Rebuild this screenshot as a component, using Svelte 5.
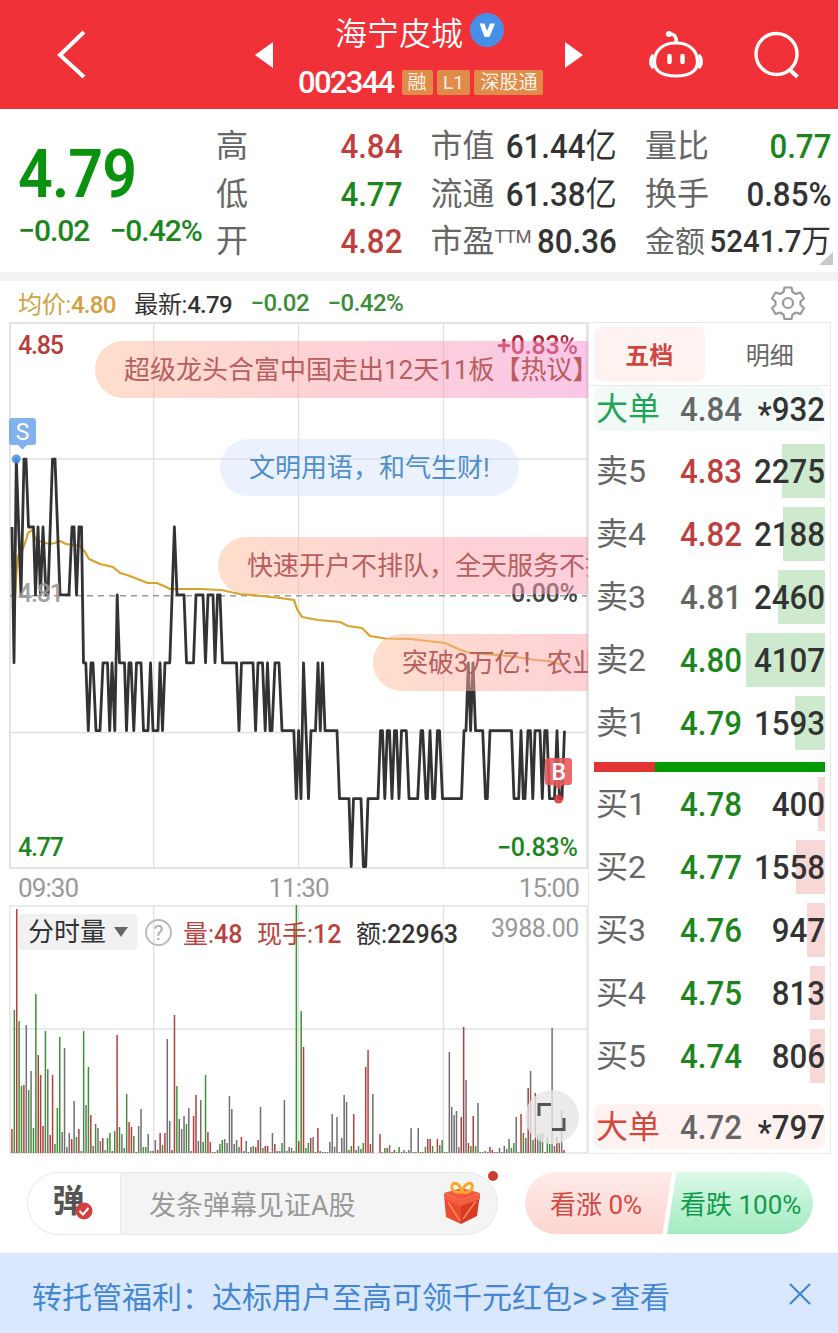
<script lang="ts">
	type Row = { name: string; price: string; vol: string; tone: string; bar: number };

	// label, figure, unit, tone
	const stats = [
		[['高', '4.84', '', 'red'], ['低', '4.77', '', 'green'], ['开', '4.82', '', 'red']],
		[['市值', '61.44', '亿', 'ink'], ['流通', '61.38', '亿', 'ink'], ['市盈', '80.36', '', 'ink']],
		[['量比', '0.77', '', 'green'], ['换手', '0.85%', '', 'ink'], ['金额', '5241.7', '万', 'ink']]
	];

	const asks: Row[] = [
		{ name: '卖5', price: '4.83', vol: '2275', tone: 'red', bar: 43 },
		{ name: '卖4', price: '4.82', vol: '2188', tone: 'red', bar: 42 },
		{ name: '卖3', price: '4.81', vol: '2460', tone: 'flat', bar: 47 },
		{ name: '卖2', price: '4.80', vol: '4107', tone: 'green', bar: 79 },
		{ name: '卖1', price: '4.79', vol: '1593', tone: 'green', bar: 30 }
	];
	const bids: Row[] = [
		{ name: '买1', price: '4.78', vol: '400', tone: 'green', bar: 7 },
		{ name: '买2', price: '4.77', vol: '1558', tone: 'green', bar: 29 },
		{ name: '买3', price: '4.76', vol: '947', tone: 'green', bar: 18 },
		{ name: '买4', price: '4.75', vol: '813', tone: 'green', bar: 15 },
		{ name: '买5', price: '4.74', vol: '806', tone: 'green', bar: 15 }
	];

	const danmaku = [
		{ text: '超级龙头合富中国走出12天11板【热议】', x: 95, y: 19, w: 520, kind: 'hot' },
		{ text: '文明用语，和气生财!', x: 220, y: 117, w: 299, kind: 'calm' },
		{ text: '快速开户不排队，全天服务不打烊', x: 218, y: 215, w: 450, kind: 'warm' },
		{ text: '突破3万亿！农业', x: 373, y: 312, w: 400, kind: 'warm' }
	];

	// [x, price in cents over 4.70]
	const ticks: [number, number][] = [
		[12, 12], [14, 10], [16.3, 13], [21, 11], [24, 13], [26, 13], [28.5, 12], [33.5, 12], [35.5, 11], [38, 12], [40.5, 11], [43, 12], [46, 11], [48, 11],
		[52.5, 13], [55, 13], [60, 11], [69, 11], [72, 12], [74, 12], [76.5, 11], [79, 12], [81.5, 12], [83.5, 10], [85.8, 10], [88.3, 9], [91, 10], [93, 10],
		[96, 9], [100, 9], [103, 10], [107.5, 10], [109.7, 9], [112, 10], [114.8, 9], [117.2, 11], [119.5, 10], [124.5, 10], [126.5, 9], [129, 10], [131, 10],
		[133.8, 9], [136.5, 10], [141, 10], [143.5, 9], [148, 9], [150.5, 10], [153, 9], [158, 9], [160, 10], [162.5, 9], [165, 10], [169.8, 10], [174.4, 12],
		[177, 11], [184, 11], [186.5, 10], [193.5, 10], [196, 11], [203, 11], [205.5, 10], [208, 11], [213, 11], [215, 10], [217.5, 11], [220, 11], [222.5, 10],
		[236.5, 10], [239, 9], [241.5, 10], [253, 10], [255.6, 9], [258, 10], [262.5, 10], [265.2, 9], [267.5, 10], [270, 9], [272, 9], [275, 10], [279, 10],
		[282, 9], [293.8, 9], [296.3, 8], [298.6, 9], [301, 8], [303.5, 10], [308.5, 8], [311, 9], [315.5, 9], [318, 10], [320.3, 9], [322.5, 10], [325, 9],
		[337, 9], [339.5, 8], [349, 8], [351.2, 7], [353.5, 8], [361, 8], [363.4, 7], [365.7, 7], [368, 8], [378, 8], [380.5, 9], [382.5, 9], [384.8, 8],
		[387.3, 9], [389.5, 9], [392, 8], [394.5, 9], [396.5, 9], [399, 8], [401.5, 9], [406.3, 9], [409, 8], [417.7, 8], [421, 9], [422.7, 9], [426, 8],
		[427.5, 8], [430, 9], [432.7, 8], [434.7, 8], [437.5, 9], [439.5, 9], [442.5, 8], [461.5, 8], [464, 9], [466, 9], [468.3, 10], [470.6, 9], [473, 10],
		[475.5, 9], [482.7, 9], [485.5, 8], [487.3, 8], [490, 9], [511.5, 9], [514, 8], [518.7, 8], [521, 9], [523.3, 8], [525, 8], [528, 9], [530.4, 9],
		[532.8, 8], [535, 9], [540, 9], [542.3, 8], [544.8, 9], [547, 9], [549.5, 8], [554.5, 8], [557, 9], [559.5, 8], [562, 8], [564.5, 9]
	];
	const priceLine = ticks.map(([x, c]) => `${x},${866.5 - (c - 7) * 67.9}`).join(' ');
	const avgLine = '15,600 16.5,572 18,556 22,551 25,543 28,533 32,530 36,540 42,542 50,544 55,543 60,541 66,544 80,546 85,552 89,559 100,564 113,567 120,573 127,575 135,578 148,583 157,583 166,587 170,589 200,589 221,590 240,594 262,596 280,598 294,600 297,609 302,617 318,620 340,622 348,626 362,628 370,636 385,638.5 410,639 445,643 458,649 470,653 510,656 535,660 549,661 562,665';

	// one token per minute: direction + height
	const volumes = ('r24 g143 r244 g132 g67 r68 k128 g63 k82 g25 g159 r98 r78 r27 g122 k84 r18 r78 g9 g45 g116 k21 k105 k6 k20 r14 k52 g16 r24 k2 ' +
		'g122 k48 g86 r38 k7 g29 k25 k12 r15 k3 g15 g20 r2 g22 r118 g26 k19 k5 g59 r31 r26 g17 k1 k27 k44 g6 g6 k19 k2 g2 ' +
		'k13 r3 r20 g8 r20 k114 k32 r3 r138 g67 k34 k24 k37 g29 k45 k2 r37 r58 k12 k53 g11 g78 r21 r11 k1 k1 r3 g9 g13 k14 ' +
		'k10 k57 k44 k9 k13 g6 r16 k2 k12 k1 k6 g7 r6 r13 k46 g5 r7 r7 k1 k20 r9 k2 k2 g10 k53 k2 k6 k5 k2 g248 ' +
		'r12 g142 r106 g5 g10 r15 k16 k1 r25 g2 r1 g1 k1 k11 k39 k6 k36 k1 k15 k58 k51 r3 g7 r39 k3 k7 g4 g10 r86 r103 ' +
		'r9 k59 k0 k0 r19 k1 g5 r5 k8 r1 r3 g1 g6 r1 k3 k1 g3 k25 k1 k1 k25 r1 g1 g6 r14 r14 g7 k1 r14 k8 ' +
		'g13 k1 g1 k101 k46 k38 k42 k6 r36 r126 k73 r10 g7 r37 g7 k50 k1 k1 g2 k1 r6 r3 k1 k1 k5 g1 k7 k4 k14 g5 ' +
		'g10 k36 k1 r39 g20 k15 r65 k82 g13 r60 k18 k19 g20 r1 g16 g9 k125 k7 r16 k10 k43 r3').split(' ');
	const volColor: Record<string, string> = { r: '#b23f3d', g: '#3f9038', k: '#707070' };
</script>

<div class="screen">
	<header>
		<svg class="back" width="34" height="54" viewBox="0 0 34 54"><path d="M29 4 5 27l24 22" fill="none" stroke="#fff" stroke-width="4" /></svg>
		<svg class="prev" width="18" height="26" viewBox="0 0 18 26"><path d="M18 0v26L0 13z" fill="#fff" /></svg>
		<div class="title">
			<div class="name">海宁皮城
				<svg width="34" height="34" viewBox="0 0 34 34"><circle cx="17" cy="17" r="17" fill="#468fe9" /><path d="M9.500 10.500h5l2.500 7.500 3-7.500h5l-5.500 13.500h-5z" fill="#fff" /></svg>
			</div>
			<div class="code"><b>002344</b><i>融</i><i>L1</i><i>深股通</i></div>
		</div>
		<svg class="next" width="18" height="26" viewBox="0 0 18 26"><path d="M0 0v26l18-13z" fill="#fff" /></svg>
		<svg class="bot" width="54" height="50" viewBox="0 0 54 50" fill="none" stroke="#fff" stroke-width="3.200">
			<path d="M27 13C14 13 6 20 5.500 31 5 41 13 46 27 46s22-5 21.500-15C48 20 40 13 27 13z" />
			<path d="M4.500 25C1 28 1 35 4.500 38M49.500 25c3.500 3 3.500 10 0 13M27 12.500c1-5-1-8-6-9" stroke-width="3.500" />
			<circle cx="20" cy="4" r="3" fill="#fff" stroke="none" />
			<path d="M20.500 26v6M33.500 26v6" stroke-width="4.500" stroke-linecap="round" />
		</svg>
		<svg class="search" width="48" height="48" viewBox="0 0 48 48" fill="none" stroke="#fff" stroke-width="3.400"><circle cx="22.500" cy="23" r="20.500" /><path d="m35 38 8.500 8" stroke-width="4" /></svg>
	</header>

	<section class="quote">
		<div class="last">
			<div class="big">4.79</div>
			<div class="chg"><span>−0.02</span><span>−0.42%</span></div>
		</div>
		{#each stats as col}
			<div class="col">
				{#each col as [k, v, unit, tone]}
					<div class="stat" class:tight={k === '金额'}>
						<span class="key">{k}{#if k === '市盈'}<sup>TTM</sup>{/if}</span>
						<div class="val {tone}"><b>{v}</b>{#if unit}<span>{unit}</span>{/if}</div>
					</div>
				{/each}
			</div>
		{/each}
		<svg class="corner" width="14" height="13" viewBox="0 0 14 13"><path d="M14 0v13H0z" fill="#c9c9c9" /></svg>
	</section>

	<div class="legend">
		<span class="avg">均价:<b>4.80</b></span>
		<span>最新:<b>4.79</b></span>
		<b class="dn">−0.02</b>
		<b class="dn">−0.42%</b>
		<svg width="36" height="36" viewBox="0 0 36 36" fill="none" stroke="#999" stroke-width="2.200" stroke-linejoin="round">
			<path d="M14.500 2.500h7l1 4.500 3.500 2 4.500-1.500 3.500 6-3.500 3v3.500l3.500 3-3.500 6-4.500-1.500-3.500 2-1 4.500h-7l-1-4.500-3.500-2L5.500 29 2 23l3.500-3v-3.500l-3.500-3 3.500-6L10 9l3.500-2z" />
			<circle cx="18" cy="18" r="5" />
		</svg>
	</div>

	<main>
		<div class="charts">
			<div class="price">
				<svg width="588" height="548" viewBox="0 322 588 548">
					<g stroke="#e0e0e0" stroke-width="1.300">
						<path d="M10 459H587M10 732.500H587M153.700 323V868M298.500 323V868M443.500 323V868" />
						<path d="M10 323H587V868H10z" fill="none" stroke="#e3e3e3" stroke-width="2" />
					</g>
					<path d="M10 595.700H587" stroke="#999" stroke-width="1.500" stroke-dasharray="6 5" />
					<g class="num">
						<text x="18" y="353.500" textLength="46" fill="#b73d3b">4.85</text>
						<text x="18" y="855.500" textLength="46" fill="#1c861c">4.77</text>
						<text x="497" y="353.500" textLength="81" fill="#b02030">+0.83%</text>
						<text x="511" y="602" textLength="67" fill="#444">0.00%</text>
						<text x="497" y="855.500" textLength="81" fill="#1c861c">−0.83%</text>
					</g>
					<polyline points={avgLine} fill="none" stroke="#d9a228" stroke-width="2.200" stroke-linejoin="round" />
					<polyline points={priceLine} fill="none" stroke="#333" stroke-width="2.800" stroke-linejoin="round" />
					<text class="num" x="18" y="602" textLength="46" fill="#999" opacity=".9">4.81</text>
					<g opacity=".88">
						<path d="M12 418h21a3 3 0 0 1 3 3v21a3 3 0 0 1-3 3h-6l-4.500 4.500L18 445h-6a3 3 0 0 1-3-3v-21a3 3 0 0 1 3-3z" fill="#70a8eb" />
						<circle cx="16.300" cy="459" r="4.500" fill="#4d8fe0" />
						<path d="M548 758h21a3 3 0 0 1 3 3v21a3 3 0 0 1-3 3h-6l-4.500 4.500L554 785h-6a3 3 0 0 1-3-3v-21a3 3 0 0 1 3-3z" fill="#e9575a" />
						<circle cx="558.500" cy="799" r="4.500" fill="#dc3237" />
					</g>
					<text class="mark" x="22.500" y="440">S</text>
					<text class="mark buy-mark" x="558.800" y="780">B</text>
				</svg>
				<div class="fly">
					{#each danmaku as d}
						<span class={d.kind} style="left:{d.x}px;top:{d.y}px;width:{d.w}px">{d.text}</span>
					{/each}
				</div>
			</div>
			<div class="times"><span>09:30</span><span>11:30</span><span>15:00</span></div>
			<div class="volume">
				<svg width="588" height="249" viewBox="0 905 588 249">
					<path d="M10 906H587V1153H10zM10 1029H587M153.700 906V1153M298.500 906V1153M443.500 906V1153" fill="none" stroke="#e3e3e3" stroke-width="1.500" />
					{#each volumes as v, i}
						<rect x={11.2 + i * 2.39} y={1153 - +v.slice(1)} width="1.500" height={v.slice(1)} fill={volColor[v[0]]} />
					{/each}
				</svg>
				<div class="vhead">
					<span class="pick">分时量<svg width="14" height="10" viewBox="0 0 14 10"><path d="M0 0h14L7 10z" fill="#666" /></svg></span>
					<span class="help">?</span>
					<span class="r">量:<b>48</b></span>
					<span class="r">现手:<b>12</b></span>
					<span>额:<b>22963</b></span>
					<b class="max">3988.00</b>
				</div>
				<svg class="full" width="54" height="54" viewBox="0 0 54 54"><circle cx="27" cy="27" r="27" fill="#e6e6e6" opacity=".8" /><path d="M14 26V14.500h12M39 28v11.500H27" fill="none" stroke="#555" stroke-width="3" /></svg>
			</div>
		</div>

		<aside>
			<div class="tabs"><span class="on">五档</span><span>明细</span></div>
			<div class="large sell"><span>大单</span><b class="flat">4.84</b><b><i>*</i>932</b></div>
			{#each asks as r}
				<div class="row ask"><div class="depth" style="width:{r.bar}px"></div><span>{r.name}</span><b class={r.tone}>{r.price}</b><b>{r.vol}</b></div>
			{/each}
			<div class="ratio"><div style="width:26.400%"></div></div>
			{#each bids as r}
				<div class="row bid"><div class="depth" style="width:{r.bar}px"></div><span>{r.name}</span><b class={r.tone}>{r.price}</b><b>{r.vol}</b></div>
			{/each}
			<div class="large buy"><span>大单</span><b class="flat">4.72</b><b><i>*</i>797</b></div>
		</aside>
	</main>

	<section class="chat">
		<div class="input">
			<div class="toggle">弹<svg width="18" height="18" viewBox="0 0 18 18"><circle cx="9" cy="9" r="8.500" fill="#d2423c" /><path d="m4.500 9 3.500 3.500L13.500 6" fill="none" stroke="#fff" stroke-width="2" /></svg></div>
			<div class="hint">发条弹幕见证A股</div>
			<svg class="gift" width="40" height="42" viewBox="0 0 40 42">
				<path d="M2 12 19 18v24L4 35z" fill="#ee4a2f" />
				<path d="M19 18 38 12l-3 22-16 8z" fill="#d93a25" />
				<path d="M2 11 20 6l18 5-19 7z" fill="#f4573c" />
				<path d="M2 11 19 18 38 11v6l-19 7L3 17z" fill="#f2603f" />
				<path d="m6 20 12 19M34 19 21 37" stroke="#ff8a55" stroke-width="1.500" />
				<path d="M20 10c-3-11-11-11-10-4 1 4 6 5 10 4 3-11 12-11 10-4-1 4-6 5-10 4z" fill="none" stroke="#f6a72e" stroke-width="3" />
			</svg>
			<i class="dot"></i>
		</div>
		<div class="vote">
			<svg width="288" height="62" viewBox="0 0 288 62">
				<defs>
					<linearGradient id="up" x2="0" y2="1"><stop stop-color="#ffebe9" /><stop offset="1" stop-color="#fcd5d0" /></linearGradient>
					<linearGradient id="down" x2="0" y2="1"><stop stop-color="#dbf9e7" /><stop offset="1" stop-color="#a3ebc1" /></linearGradient>
				</defs>
				<path d="M31 0h116l-9.500 62H31a31 31 0 0 1 0-62z" fill="url(#up)" />
				<path d="M151.500 0H257a31 31 0 0 1 0 62H142z" fill="url(#down)" />
			</svg>
			<span class="up">看涨 0%</span><span class="down">看跌 100%</span>
		</div>
	</section>

	<footer>
		<span>转托管福利：达标用户至高可领千元红包<i>&gt;&gt;</i>查看</span>
		<svg width="22" height="22" viewBox="0 0 22 22"><path d="m1 1 20 20M21 1 1 21" stroke="#4486d2" stroke-width="2.200" /></svg>
	</footer>
</div>

<style>
	:global(body) { margin: 0; background: #fff; }
	.screen { width: 838px; height: 1333px; overflow: hidden; font-family: Roboto, "Noto Sans CJK SC", sans-serif; font-weight: 400; color: #333; display: flex; flex-direction: column; white-space: nowrap; }
	svg { display: block; flex: none; }
	b { font-weight: 500; }
	.red { color: #bd403e; }
	.green { color: #1c861c; }
	.flat { color: #666; }
	.ink { color: #333; }

	header { height: 109px; background: #f13138; color: #fff; display: flex; align-items: center; flex: none; }
	.back { margin-left: 55px; }
	.prev { margin-left: 166px; }
	.title { width: 246px; margin: 0 21px 0 25px; height: 109px; }
	.name { font-size: 32px; font-weight: 350; line-height: 44px; margin-top: 12px; padding-left: 37px; display: flex; gap: 7px; }
	.name svg { margin-top: 1px; }
	.code { display: flex; align-items: center; gap: 4.500px; height: 32px; margin-top: 10px; }
	.code b { font-size: 31px; letter-spacing: -1.700px; margin-right: 3.500px; }
	.code i { font-style: normal; background: #e08b4a; border-radius: 2px; font-size: 19px; line-height: 25px; height: 25px; padding: 0 6px; color: #fff3e4; }
	.bot { margin: 0 51px 0 66px; }

	.quote { height: 163px; border-bottom: 9px solid #f3f3f3; flex: none; display: flex; position: relative; }
	.last { width: 198px; padding-left: 18px; color: #0a920f; flex: none; }
	.big { font-size: 67px; font-weight: 600; letter-spacing: -1px; line-height: 70px; margin-top: 30px; transform: scaleX(.91); transform-origin: 0 0; }
	.chg { font-size: 30px; font-weight: 500; color: #1c861c; letter-spacing: -1px; display: flex; gap: 20px; line-height: 40px; margin-top: 2px; }
	.col { width: 186px; margin-right: 28.500px; padding-top: 14px; flex: none; }
	.stat { display: flex; justify-content: space-between; height: 47.500px; align-items: center; font-size: 32px; line-height: 47px; color: #666; }
	.key { width: 0; }
	.val { transform: scaleX(.92); transform-origin: 100% 50%; font-size: 34px; }
	.tight { font-size: 30px; }
	.tight .val { font-size: 32px; }
	sup { font-size: 18.500px; line-height: 0; vertical-align: 9px; letter-spacing: -.600px; }
	.corner { position: absolute; right: 5px; bottom: 7px; }

	.legend { height: 41px; flex: none; display: flex; align-items: center; font-size: 24px; padding: 2px 32px 0 18px; box-sizing: border-box; gap: 18.500px; letter-spacing: -.300px; }
	.legend b { letter-spacing: -.700px; }
	.legend .dn { color: #3b8d3a; letter-spacing: -.500px; }
	.avg { color: #d3a040; }
	.legend svg { margin-left: auto; }

	main { display: flex; height: 832px; flex: none; }
	.charts { width: 588px; }
	.price, .volume { position: relative; }
	.num { font-size: 25px; font-weight: 500; }
	.mark { font-size: 23px; fill: #fff; text-anchor: middle; }
	.buy-mark { font-weight: 500; }
	.fly { position: absolute; inset: 0; overflow: hidden; }
	.fly span { position: absolute; height: 57px; line-height: 59px; border-radius: 29px; padding-left: 29px; box-sizing: border-box; font-size: 26px; color: #b85e5e; }
	.fly .hot { background: linear-gradient(90deg, rgba(253, 189, 153, .5), rgba(253, 165, 173, .5) 45%, rgba(245, 141, 213, .5)); }
	.fly .warm { background: linear-gradient(90deg, rgba(253, 189, 153, .5), rgba(253, 165, 173, .5) 50%, rgba(249, 155, 189, .5)); }
	.fly .calm { background: rgba(215, 229, 251, .5); color: #4f90cb; }
	.times { height: 35px; display: flex; justify-content: space-between; padding: 0 9px 0 18px; font-size: 26px; line-height: 36px; color: #999; letter-spacing: -.900px; }
	.vhead { position: absolute; left: 18px; right: 9px; top: 9px; display: flex; align-items: center; font-size: 25px; height: 36px; }
	.vhead b { letter-spacing: 0; }
	.pick { background: #f1f1f1; border-radius: 4px; width: 109px; height: 36px; padding-left: 10px; line-height: 39px; display: flex; align-items: center; gap: 8px; font-size: 26px; }
	.help { border: 2px solid #bbb; border-radius: 50%; width: 23px; height: 23px; line-height: 24px; text-align: center; font-size: 21px; color: #aaa; margin: 0 11px 0 8px; }
	.vhead .r { color: #bd403e; margin-right: 14.500px; }
	.vhead .max { margin-left: auto; color: #999; font-weight: 400; margin-top: -8px; letter-spacing: -.400px; }
	.full { position: absolute; left: 525px; top: 185px; }

	aside { width: 243px; box-sizing: border-box; border: 1px solid #e8e8e8; padding: 0 5px; height: 832px; }
	.tabs { display: flex; height: 63px; border-bottom: 1px solid #e8e8e8; margin: 0 -5px; padding: 4px 5px; box-sizing: border-box; }
	.tabs span { width: 111px; height: 55px; line-height: 58px; text-align: center; font-size: 24px; color: #666; margin-right: 10px; }
	.tabs span + span { margin: 0; }
	.tabs .on { background: #fff3f2; border-radius: 8px; color: #cf4640; font-weight: 700; }
	.large, .row { display: grid; grid-template-columns: 84px 60px 1fr; align-items: center; font-size: 32px; padding-left: 2px; position: relative; color: #666; }
	.large b, .row b { font-size: 34px; line-height: 45px; transform: scaleX(.92); transform-origin: 0 50%; }
	.large b:last-child, .row b:last-child { text-align: right; color: #333; transform-origin: 100% 50%; }
	.large { height: 45px; border-radius: 9px; }
	.large span, .row span { line-height: 46px; }
	.large i { font-style: normal; position: relative; top: 5px; }
	.sell { background: #f1faf6; color: #1ea657; margin-bottom: 13px; }
	.buy { background: #fff3f2; color: #d4483f; margin-top: 21px; }
	.row { height: 54px; margin-bottom: 9px; }
	.row > * { position: relative; }
	.row .depth { position: absolute; right: 0; top: 0; bottom: 0; background: #cdeace; }
	.bid .depth { background: #f8d7d7; }
	.ratio { height: 10px; background: #049a04; margin: 12px 0 5px; }
	.ratio div { height: 100%; background: #e13433; }

	.chat { height: 99px; flex: none; display: flex; padding: 18px 25px 0 27px; box-sizing: border-box; }
	.input { position: relative; width: 471px; height: 63px; box-sizing: border-box; border: 1px solid #e8e8e8; border-radius: 32px; display: flex; background: linear-gradient(90deg, #fff 92px, #e8e8e8 92px, #e8e8e8 93px, #f4f4f4 93px); }
	.toggle { width: 93px; font-size: 32px; font-weight: 700; line-height: 57px; text-align: center; position: relative; text-indent: -12px; color: #555; }
	.toggle svg { position: absolute; left: 47px; top: 29px; }
	.hint { font-size: 27px; line-height: 66px; color: #999; padding-left: 28px; flex: 1; }
	.gift { margin: 9px 15px 0 0; }
	.dot { position: absolute; right: -1px; top: -2px; width: 10px; height: 10px; border-radius: 50%; background: #cf3b38; }
	.vote { margin-left: 27px; width: 288px; height: 62px; position: relative; }
	.vote span { position: absolute; top: 0; line-height: 66px; font-size: 26px; }
	.up { left: 25px; color: #d4483f; }
	.down { left: 155px; color: #129b4c; }

	footer { height: 80px; background: #d9e8fc; color: #4486d2; font-size: 30px; display: flex; align-items: center; justify-content: space-between; padding: 3px 27px 0 32px; box-sizing: border-box; }
	footer i { font-style: normal; letter-spacing: 3.300px; }
	footer svg { margin-top: -2px; }
</style>
